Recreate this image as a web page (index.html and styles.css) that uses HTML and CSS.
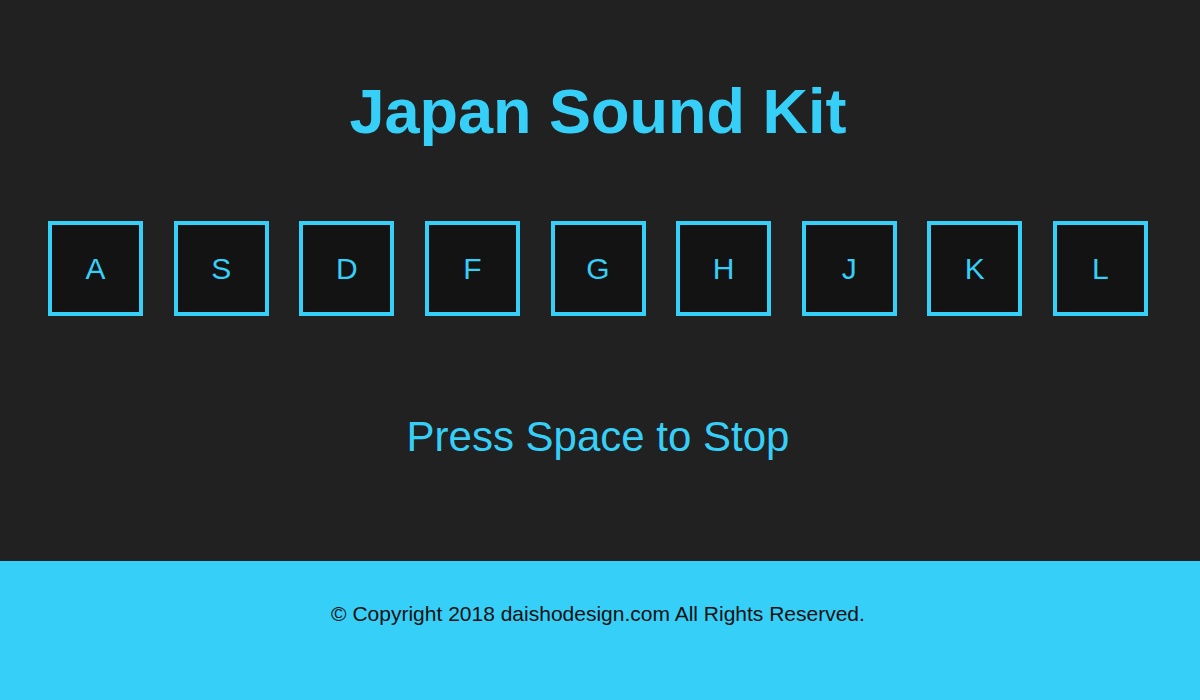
FILE: index.html
```html
<!DOCTYPE html>
<html lang="en">
<head>
<meta charset="utf-8">
<title>Japan Sound Kit</title>
<link rel="stylesheet" href="styles.css">
</head>
<body>
<main class="main">
  <h1 class="title">Japan Sound Kit</h1>
  <div class="keys">
    <div class="key">A</div>
    <div class="key">S</div>
    <div class="key">D</div>
    <div class="key">F</div>
    <div class="key">G</div>
    <div class="key">H</div>
    <div class="key">J</div>
    <div class="key">K</div>
    <div class="key">L</div>
  </div>
  <p class="hint">Press Space to Stop</p>
</main>
<footer class="footer">
  <p class="copy">© Copyright 2018 daishodesign.com All Rights Reserved.</p>
</footer>
</body>
</html>
```

FILE: styles.css
```css
html, body {
  margin: 0;
  padding: 0;
}
body {
  background: #212121;
  font-family: "Liberation Sans", Arial, sans-serif;
  color: #36cff8;
  padding-right: 4px;
}
.main {
  height: 561px;
  box-sizing: border-box;
  padding-top: 76px;
  display: flex;
  flex-direction: column;
  align-items: center;
}
.title {
  margin: 0;
  font-size: 63px;
  font-weight: bold;
  line-height: 70px;
}
.keys {
  margin-top: 75px;
  display: flex;
  justify-content: center;
  gap: 30.6px;
}
.key {
  width: 95px;
  height: 95px;
  box-sizing: border-box;
  border: 4px solid #36cff8;
  background: #131313;
  display: flex;
  align-items: center;
  justify-content: center;
  font-size: 30px;
}
.hint {
  margin: 96px 0 0;
  font-size: 42px;
  line-height: 50px;
}
.footer {
  background: #36cff8;
  height: 139px;
  margin-right: -4px;
  padding-right: 4px;
  box-sizing: border-box;
  display: flex;
  justify-content: center;
  padding-top: 40px;
}
.copy {
  margin: 0;
  color: #111;
  font-size: 21px;
  line-height: 26px;
}
```
